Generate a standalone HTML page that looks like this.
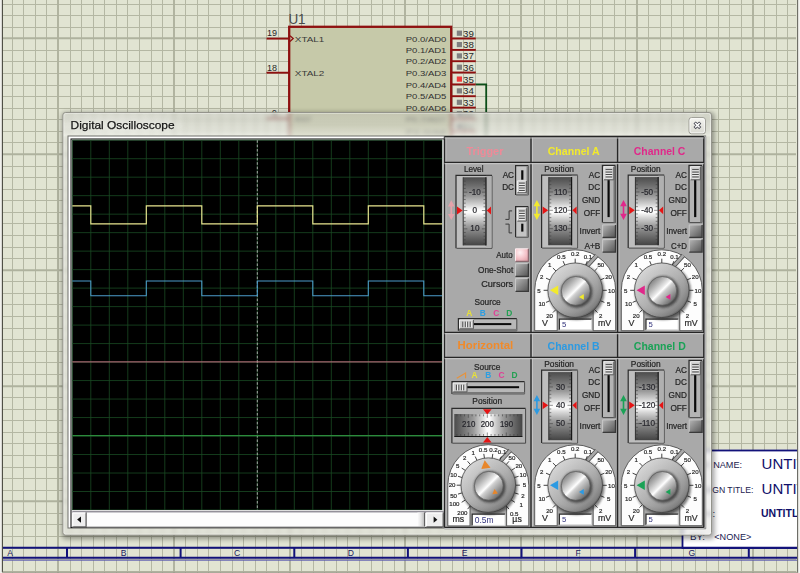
<!DOCTYPE html>
<html lang="en"><head><meta charset="utf-8"><title>Digital Oscilloscope</title>
<style>html,body{margin:0;padding:0;background:#E1E4D2;overflow:hidden}svg{display:block}text{font-family:'Liberation Sans', sans-serif;}</style></head><body>
<svg width="800" height="573" viewBox="0 0 800 573" font-family='"Liberation Sans", sans-serif'>

<defs>
<filter id="fglass" x="0" y="0" width="100%" height="100%"><feGaussianBlur stdDeviation="2.1"/></filter>
<filter id="fshadow" x="-5%" y="-5%" width="110%" height="110%"><feGaussianBlur stdDeviation="2.6"/></filter>
<filter id="fglow" x="-20%" y="-80%" width="140%" height="260%"><feGaussianBlur stdDeviation="4"/></filter>
<filter id="fknob" x="-20%" y="-20%" width="140%" height="140%"><feGaussianBlur stdDeviation="1.3"/></filter>
<filter id="fknob2" x="-30%" y="-30%" width="160%" height="160%"><feGaussianBlur stdDeviation="1.2"/></filter>
<linearGradient id="gglass" x1="0" y1="112.5" x2="0" y2="137" gradientUnits="userSpaceOnUse">
 <stop offset="0" stop-color="#C2C2C2" stop-opacity="0.36"/><stop offset="0.5" stop-color="#D2D2D2" stop-opacity="0.38"/>
 <stop offset="0.93" stop-color="#F4F4F2" stop-opacity="0.55"/><stop offset="1" stop-color="#E0E0DD" stop-opacity="0.50"/>
</linearGradient>
<linearGradient id="gthumbedge" x1="0" y1="0" x2="1" y2="0">
 <stop offset="0" stop-color="#FDFDFD"/><stop offset="0.5" stop-color="#E4E4E4"/><stop offset="1" stop-color="#B6B6B6"/>
</linearGradient>
<linearGradient id="gclose" x1="0" y1="0" x2="0" y2="1">
 <stop offset="0" stop-color="#F6F6F2"/><stop offset="0.5" stop-color="#E6E6E0"/><stop offset="1" stop-color="#DADAD2"/>
</linearGradient>
<linearGradient id="gwheelv" x1="0" y1="0" x2="0" y2="1">
 <stop offset="0" stop-color="#4C4C4C"/><stop offset="0.12" stop-color="#6C6C6C"/><stop offset="0.28" stop-color="#9A9A9A"/>
 <stop offset="0.4" stop-color="#D2D2D2"/><stop offset="0.48" stop-color="#FCFCFC"/><stop offset="0.52" stop-color="#FCFCFC"/>
 <stop offset="0.6" stop-color="#D2D2D2"/><stop offset="0.72" stop-color="#9A9A9A"/><stop offset="0.88" stop-color="#686868"/><stop offset="1" stop-color="#444444"/>
</linearGradient>
<linearGradient id="gwheelh" x1="0" y1="0" x2="1" y2="0">
 <stop offset="0" stop-color="#4C4C4C"/><stop offset="0.12" stop-color="#6C6C6C"/><stop offset="0.28" stop-color="#9A9A9A"/>
 <stop offset="0.4" stop-color="#D2D2D2"/><stop offset="0.48" stop-color="#FCFCFC"/><stop offset="0.52" stop-color="#FCFCFC"/>
 <stop offset="0.6" stop-color="#D2D2D2"/><stop offset="0.72" stop-color="#9A9A9A"/><stop offset="0.88" stop-color="#686868"/><stop offset="1" stop-color="#444444"/>
</linearGradient>
<linearGradient id="gbtn" x1="0" y1="0" x2="1" y2="1">
 <stop offset="0" stop-color="#B6B6B6"/><stop offset="0.45" stop-color="#8A8A8A"/><stop offset="1" stop-color="#545454"/>
</linearGradient>
<radialGradient id="gbtnpink" cx="0.35" cy="0.3" r="0.9">
 <stop offset="0" stop-color="#FFF2F4"/><stop offset="0.5" stop-color="#F6C6CC"/><stop offset="1" stop-color="#DC9AA2"/>
</radialGradient>
<linearGradient id="gknobo" x1="0.15" y1="0.1" x2="0.85" y2="0.9">
 <stop offset="0" stop-color="#D8D8D8"/><stop offset="0.5" stop-color="#B2B2B2"/><stop offset="1" stop-color="#808080"/>
</linearGradient>
<radialGradient id="gknobr" cx="0.46" cy="0.45" r="0.56">
 <stop offset="0" stop-color="#000" stop-opacity="0.03"/><stop offset="0.8" stop-color="#000" stop-opacity="0.0"/>
 <stop offset="0.93" stop-color="#000" stop-opacity="0.06"/><stop offset="1" stop-color="#000" stop-opacity="0.32"/>
</radialGradient>
<linearGradient id="gknobi" x1="0.12" y1="0.12" x2="0.88" y2="0.88">
 <stop offset="0" stop-color="#7C7C7C"/><stop offset="0.22" stop-color="#B4B4B4"/><stop offset="0.40" stop-color="#E4E4E4"/>
 <stop offset="0.48" stop-color="#FFFFFF"/><stop offset="0.56" stop-color="#D0D0D0"/><stop offset="0.75" stop-color="#A2A2A2"/>
 <stop offset="1" stop-color="#626262"/>
</linearGradient>
</defs>

<g id="bg">
<rect x="0" y="0" width="800" height="573" fill="#E1E4D2"/>
<path d="M12.5 0V573M23.5 0V573M35.5 0V573M46.5 0V573M70.5 0V573M81.5 0V573M93.5 0V573M104.5 0V573M116.5 0V573M127.5 0V573M139.5 0V573M151.5 0V573M162.5 0V573M185.5 0V573M197.5 0V573M208.5 0V573M220.5 0V573M232.5 0V573M243.5 0V573M255.5 0V573M266.5 0V573M278.5 0V573M301.5 0V573M313.5 0V573M324.5 0V573M336.5 0V573M347.5 0V573M359.5 0V573M371.5 0V573M382.5 0V573M394.5 0V573M417.5 0V573M428.5 0V573M440.5 0V573M452.5 0V573M463.5 0V573M475.5 0V573M486.5 0V573M498.5 0V573M509.5 0V573M533.5 0V573M544.5 0V573M556.5 0V573M567.5 0V573M579.5 0V573M590.5 0V573M602.5 0V573M614.5 0V573M625.5 0V573M648.5 0V573M660.5 0V573M671.5 0V573M683.5 0V573M695.5 0V573M706.5 0V573M718.5 0V573M729.5 0V573M741.5 0V573M764.5 0V573M776.5 0V573M787.5 0V573M2.5 4.5H796M2.5 15.5H796M2.5 27.5H796M2.5 50.5H796M2.5 61.5H796M2.5 73.5H796M2.5 85.5H796M2.5 96.5H796M2.5 108.5H796M2.5 119.5H796M2.5 131.5H796M2.5 142.5H796M2.5 166.5H796M2.5 177.5H796M2.5 189.5H796M2.5 200.5H796M2.5 212.5H796M2.5 223.5H796M2.5 235.5H796M2.5 247.5H796M2.5 258.5H796M2.5 281.5H796M2.5 293.5H796M2.5 304.5H796M2.5 316.5H796M2.5 328.5H796M2.5 339.5H796M2.5 351.5H796M2.5 362.5H796M2.5 374.5H796M2.5 397.5H796M2.5 409.5H796M2.5 420.5H796M2.5 432.5H796M2.5 443.5H796M2.5 455.5H796M2.5 467.5H796M2.5 478.5H796M2.5 490.5H796M2.5 513.5H796M2.5 524.5H796M2.5 536.5H796M2.5 548.5H796M2.5 559.5H796M2.5 571.5H796" stroke="#B4B7A3" stroke-width="1" fill="none"/>
<path d="M58 0V573M174 0V573M290 0V573M405 0V573M521 0V573M637 0V573M753 0V573M2.5 38.2H796M2.5 154.2H796M2.5 270.2H796M2.5 386.2H796M2.5 501.2H796" stroke="#AFB29E" stroke-width="1.9" fill="none"/>
<rect x="289.2" y="26.8" width="162" height="330" fill="#C6C9A9" stroke="#8E1010" stroke-width="2.3"/>
<text x="288.4" y="24.0" font-size="14.8" fill="#4A4A4A" textLength="17.2" lengthAdjust="spacingAndGlyphs">U1</text>
<path d="M266.5 38.6H289" stroke="#8E1010" stroke-width="1.9"/>
<text x="267.0" y="36.4" font-size="8.6" fill="#282828" textLength="10.0" lengthAdjust="spacingAndGlyphs">19</text>
<text x="294.8" y="41.8" font-size="8" fill="#383838" textLength="29.5" lengthAdjust="spacingAndGlyphs">XTAL1</text>
<path d="M266.5 72.7H289" stroke="#8E1010" stroke-width="1.9"/>
<text x="267.0" y="70.5" font-size="8.6" fill="#282828" textLength="10.0" lengthAdjust="spacingAndGlyphs">18</text>
<text x="294.8" y="75.9" font-size="8" fill="#383838" textLength="29.5" lengthAdjust="spacingAndGlyphs">XTAL2</text>
<path d="M290 35.8L293.2 38.6L290 41.4" stroke="#8E1010" stroke-width="1.3" fill="none"/>
<path d="M266.5 118.5H289" stroke="#8E1010" stroke-width="1.9"/>
<text x="272.0" y="116.3" font-size="8.6" fill="#282828">9</text>
<text x="294.8" y="121.7" font-size="8" fill="#383838" textLength="17.0" lengthAdjust="spacingAndGlyphs">RST</text>
<path d="M451.5 38.5H475.8" stroke="#8E1010" stroke-width="1.9"/>
<rect x="456.8" y="30.6" width="5.2" height="5.2" fill="#808080"/>
<text x="463.0" y="36.6" font-size="8.8" fill="#282828" textLength="10.8" lengthAdjust="spacingAndGlyphs">39</text>
<text x="405.8" y="41.7" font-size="8" fill="#303030" textLength="40.6" lengthAdjust="spacingAndGlyphs">P0.0/AD0</text>
<path d="M451.5 49.9H475.8" stroke="#8E1010" stroke-width="1.9"/>
<rect x="456.8" y="42.0" width="5.2" height="5.2" fill="#808080"/>
<text x="463.0" y="48.0" font-size="8.8" fill="#282828" textLength="10.8" lengthAdjust="spacingAndGlyphs">38</text>
<text x="405.8" y="53.1" font-size="8" fill="#303030" textLength="40.6" lengthAdjust="spacingAndGlyphs">P0.1/AD1</text>
<path d="M451.5 61.2H475.8" stroke="#8E1010" stroke-width="1.9"/>
<rect x="456.8" y="53.3" width="5.2" height="5.2" fill="#808080"/>
<text x="463.0" y="59.3" font-size="8.8" fill="#282828" textLength="10.8" lengthAdjust="spacingAndGlyphs">37</text>
<text x="405.8" y="64.4" font-size="8" fill="#303030" textLength="40.6" lengthAdjust="spacingAndGlyphs">P0.2/AD2</text>
<path d="M451.5 72.5H475.8" stroke="#8E1010" stroke-width="1.9"/>
<rect x="456.8" y="64.6" width="5.2" height="5.2" fill="#808080"/>
<text x="463.0" y="70.6" font-size="8.8" fill="#282828" textLength="10.8" lengthAdjust="spacingAndGlyphs">36</text>
<text x="405.8" y="75.7" font-size="8" fill="#303030" textLength="40.6" lengthAdjust="spacingAndGlyphs">P0.3/AD3</text>
<path d="M451.5 84.4H475.8" stroke="#8E1010" stroke-width="1.9"/>
<rect x="456.8" y="76.5" width="5.2" height="5.2" fill="#F03A3A"/>
<text x="463.0" y="82.5" font-size="8.8" fill="#282828" textLength="10.8" lengthAdjust="spacingAndGlyphs">35</text>
<text x="405.8" y="87.6" font-size="8" fill="#303030" textLength="40.6" lengthAdjust="spacingAndGlyphs">P0.4/AD4</text>
<path d="M451.5 96.2H475.8" stroke="#8E1010" stroke-width="1.9"/>
<rect x="456.8" y="88.3" width="5.2" height="5.2" fill="#808080"/>
<text x="463.0" y="94.3" font-size="8.8" fill="#282828" textLength="10.8" lengthAdjust="spacingAndGlyphs">34</text>
<text x="405.8" y="99.4" font-size="8" fill="#303030" textLength="40.6" lengthAdjust="spacingAndGlyphs">P0.5/AD5</text>
<path d="M451.5 107.6H475.8" stroke="#8E1010" stroke-width="1.9"/>
<rect x="456.8" y="99.7" width="5.2" height="5.2" fill="#808080"/>
<text x="463.0" y="105.7" font-size="8.8" fill="#282828" textLength="10.8" lengthAdjust="spacingAndGlyphs">33</text>
<text x="405.8" y="110.8" font-size="8" fill="#303030" textLength="40.6" lengthAdjust="spacingAndGlyphs">P0.6/AD6</text>
<path d="M451.5 119.1H475.8" stroke="#8E1010" stroke-width="1.9"/>
<rect x="456.8" y="111.2" width="5.2" height="5.2" fill="#808080"/>
<text x="463.0" y="117.2" font-size="8.8" fill="#282828" textLength="10.8" lengthAdjust="spacingAndGlyphs">32</text>
<text x="405.8" y="122.3" font-size="8" fill="#303030" textLength="40.6" lengthAdjust="spacingAndGlyphs">P0.7/AD7</text>
<path d="M451.5 131.8H475.8" stroke="#8E1010" stroke-width="1.9"/>
<rect x="456.8" y="123.9" width="5.2" height="5.2" fill="#808080"/>
<text x="463.0" y="129.9" font-size="8.8" fill="#282828" textLength="10.8" lengthAdjust="spacingAndGlyphs">21</text>
<text x="405.8" y="135.0" font-size="8" fill="#303030" textLength="40.6" lengthAdjust="spacingAndGlyphs">P2.0/A8</text>
<path d="M475.8 84.4H486.2V330" stroke="#0B4E18" stroke-width="1.8" fill="none"/>
<rect x="682.5" y="450.5" width="116" height="97.5" fill="#FFFFFF" stroke="#12127A" stroke-width="1.8"/>
<text x="691.4" y="467.6" font-size="9.4" fill="#22224E" textLength="50.7" lengthAdjust="spacingAndGlyphs">FILE NAME:</text>
<text x="692.0" y="492.6" font-size="9.4" fill="#22224E" textLength="61.3" lengthAdjust="spacingAndGlyphs">DESIGN TITLE:</text>
<text x="688.4" y="517.2" font-size="9.4" fill="#22224E" textLength="26.8" lengthAdjust="spacingAndGlyphs">PATH:</text>
<text x="690.0" y="540.0" font-size="9.4" fill="#1A1A50" textLength="15.0" lengthAdjust="spacingAndGlyphs">BY:</text>
<text x="714.3" y="540.0" font-size="9.4" fill="#1A1A50" textLength="37.0" lengthAdjust="spacingAndGlyphs">&lt;NONE&gt;</text>
<clipPath id="tbclip"><rect x="683" y="451" width="114.3" height="96"/></clipPath>
<g clip-path="url(#tbclip)">
<text x="761.6" y="468.5" font-size="15.0" fill="#10106A">UNTITLED.DSN</text>
<text x="761.6" y="493.7" font-size="15.0" fill="#10106A">UNTITLED</text>
<text x="761.0" y="517.0" font-size="10.5" fill="#10106A" font-weight="bold">UNTITLED.DSN</text>
</g>
<path d="M2.5 547.8H797.5" stroke="#12127A" stroke-width="2"/>
<path d="M2.5 557.8H797.5" stroke="#12127A" stroke-width="2"/>
<path d="M2.5 560.2H797.5" stroke="#5A5AB0" stroke-width="1"/>
<path d="M67.0 548V558" stroke="#12127A" stroke-width="2"/>
<path d="M180.6 548V558" stroke="#12127A" stroke-width="2"/>
<path d="M294.3 548V558" stroke="#12127A" stroke-width="2"/>
<path d="M407.9 548V558" stroke="#12127A" stroke-width="2"/>
<path d="M521.5 548V558" stroke="#12127A" stroke-width="2"/>
<path d="M635.1 548V558" stroke="#12127A" stroke-width="2"/>
<path d="M748.8 548V558" stroke="#12127A" stroke-width="2"/>
<text x="10.0" y="556.0" font-size="8.6" fill="#1A1A60" text-anchor="middle">A</text>
<text x="123.6" y="556.0" font-size="8.6" fill="#1A1A60" text-anchor="middle">B</text>
<text x="237.2" y="556.0" font-size="8.6" fill="#1A1A60" text-anchor="middle">C</text>
<text x="350.9" y="556.0" font-size="8.6" fill="#1A1A60" text-anchor="middle">D</text>
<text x="464.5" y="556.0" font-size="8.6" fill="#1A1A60" text-anchor="middle">E</text>
<text x="578.1" y="556.0" font-size="8.6" fill="#1A1A60" text-anchor="middle">F</text>
<text x="691.8" y="556.0" font-size="8.6" fill="#1A1A60" text-anchor="middle">G</text>
<rect x="0" y="0" width="2" height="573" fill="#F0F0EC"/>
<path d="M2.4 0V572" stroke="#48483F" stroke-width="1.1"/>
<rect x="798" y="0" width="2" height="573" fill="#F4F4F0"/>
<path d="M797.6 0V573" stroke="#6A6A62" stroke-width="1.1"/>
<path d="M2 572.3H798" stroke="#9A9C8C" stroke-width="1"/>
</g>
<rect x="61.9" y="112.5" width="652.6" height="426.6" rx="4" fill="#000" opacity="0.36" filter="url(#fshadow)"/>
<clipPath id="frameclip"><rect x="62.9" y="112.5" width="648.6" height="422.6" rx="2.5"/></clipPath>
<g clip-path="url(#frameclip)">
<use href="#bg" filter="url(#fglass)"/>
<rect x="62.9" y="112.5" width="648.6" height="422.6" fill="url(#gglass)"/>
</g>
<rect x="62.9" y="112.5" width="648.6" height="422.6" rx="2.5" fill="none" stroke="#94948C" stroke-width="1"/>
<rect x="63.9" y="113.5" width="646.6" height="420.6" rx="2" fill="none" stroke="#FFFFFF" stroke-opacity="0.35" stroke-width="1"/>
<ellipse cx="122" cy="124.5" rx="60" ry="7" fill="#FFFFFF" opacity="0.40" filter="url(#fglow)"/>
<text x="70.6" y="128.7" font-size="11.8" fill="#141414" textLength="104.0" lengthAdjust="spacingAndGlyphs" stroke="#141414" stroke-width="0.25">Digital Oscilloscope</text>
<rect x="689" y="117.6" width="16.4" height="16.2" rx="2.4" fill="url(#gclose)" stroke="#9C9C94" stroke-width="1"/>
<rect x="690" y="118.6" width="14.4" height="14.2" rx="1.8" fill="none" stroke="#FFFFFF" stroke-opacity="0.7" stroke-width="1"/>
<path d="M695.7 123.6L699.1 127M699.1 123.6L695.7 127" stroke="#4A4A54" stroke-width="3.1" stroke-linecap="square"/>
<path d="M695.7 123.6L699.1 127M699.1 123.6L695.7 127" stroke="#FFFFFF" stroke-width="1.5" stroke-linecap="square"/>
<rect x="68" y="136" width="637.6" height="392" fill="#FFFFFF" stroke="#6E6E6A" stroke-width="1"/>
<rect x="71" y="139" width="373" height="388.5" fill="#FFFFFF" stroke="#1A1A1A" stroke-width="1.1"/>
<rect x="72.3" y="140.2" width="370.0" height="369.8" fill="#000000"/>
<path d="M72.30 140.2V510.0M72.3 140.20H442.3M90.80 140.2V510.0M72.3 158.69H442.3M109.30 140.2V510.0M72.3 177.18H442.3M127.80 140.2V510.0M72.3 195.67H442.3M146.30 140.2V510.0M72.3 214.16H442.3M164.80 140.2V510.0M72.3 232.65H442.3M183.30 140.2V510.0M72.3 251.14H442.3M201.80 140.2V510.0M72.3 269.63H442.3M220.30 140.2V510.0M72.3 288.12H442.3M238.80 140.2V510.0M72.3 306.61H442.3M257.30 140.2V510.0M72.3 325.10H442.3M275.80 140.2V510.0M72.3 343.59H442.3M294.30 140.2V510.0M72.3 362.08H442.3M312.80 140.2V510.0M72.3 380.57H442.3M331.30 140.2V510.0M72.3 399.06H442.3M349.80 140.2V510.0M72.3 417.55H442.3M368.30 140.2V510.0M72.3 436.04H442.3M386.80 140.2V510.0M72.3 454.53H442.3M405.30 140.2V510.0M72.3 473.02H442.3M423.80 140.2V510.0M72.3 491.51H442.3M442.30 140.2V510.0M72.3 510.00H442.3" stroke="#194A23" stroke-width="0.8" fill="none"/>
<path d="M257.30 140.2V510.0" stroke="#B8B8B8" stroke-width="0.9" stroke-dasharray="2.6 1.8" fill="none"/>
<path d="M72.30 205.90L90.80 205.90L90.80 223.90L146.30 223.90L146.30 205.90L201.80 205.90L201.80 223.90L257.30 223.90L257.30 205.90L312.80 205.90L312.80 223.90L368.30 223.90L368.30 205.90L423.80 205.90L423.80 223.90L442.30 223.90" stroke="#EAE690" stroke-width="1.15" fill="none" stroke-linejoin="miter"/>
<path d="M72.30 280.90L90.80 280.90L90.80 295.70L146.30 295.70L146.30 280.90L201.80 280.90L201.80 295.70L257.30 295.70L257.30 280.90L312.80 280.90L312.80 295.70L368.30 295.70L368.30 280.90L423.80 280.90L423.80 295.70L442.30 295.70" stroke="#4C9CCC" stroke-width="1.05" fill="none" stroke-linejoin="miter"/>
<path d="M72.3 361.9H442.3" stroke="#C87484" stroke-width="1.0"/>
<path d="M72.3 435.6H442.3" stroke="#2C8A3C" stroke-width="1.2"/>
<rect x="442.3" y="139.5" width="2" height="388" fill="#DCDCDC"/>
<rect x="72.3" y="510.2" width="371.4" height="17" fill="#FBFBFB"/>
<path d="M72.3 510.8H443.7" stroke="#DEDEDE" stroke-width="1.4"/>
<path d="M72.3 512.0H443.7" stroke="#3C3648" stroke-width="1.0"/>
<rect x="86.8" y="512.5" width="337.6" height="14.4" fill="#FDFDFD"/>
<rect x="417.5" y="512.5" width="7" height="14.4" fill="url(#gthumbedge)"/>
<path d="M424.6 512.5V527.2" stroke="#5C5C5C" stroke-width="1.1"/>
<path d="M86.8 526.8H425" stroke="#B4B4B4" stroke-width="1.0"/>
<rect x="72.3" y="512.4" width="14.2" height="14.6" fill="#EEEEEE"/>
<path d="M86.1 512.4V527.2M72.3 526.9H86.5" stroke="#626262" stroke-width="1.3" fill="none"/>
<path d="M72.8 526.4V513H85.3" stroke="#FFFFFF" stroke-width="1" fill="none"/>
<path d="M77.1 519.6L81.0 516.4V522.8z" fill="#101010"/>
<rect x="425.9" y="512.4" width="17.7" height="14.6" fill="#EEEEEE"/>
<path d="M443.2 512.4V527.2M425.9 526.9H443.59999999999997" stroke="#626262" stroke-width="1.3" fill="none"/>
<path d="M426.4 526.4V513H442.4" stroke="#FFFFFF" stroke-width="1" fill="none"/>
<path d="M437.4 519.7L433.6 516.6V522.8z" fill="#101010"/>
<rect x="444.5" y="136.5" width="261.19999999999993" height="392.4" fill="#B2B2B2"/>
<path d="M705.7 137V528.9H444.5" stroke="#8A8A8A" stroke-width="0.8" fill="none"/>
<rect x="444.5" y="136.5" width="259.69999999999993" height="391.2" fill="#A9A9A9"/>
<text x="484.9" y="155.2" font-size="11.3" fill="#EE8A98" text-anchor="middle" font-weight="bold" textLength="37.0" lengthAdjust="spacingAndGlyphs">Trigger</text>
<text x="463.9" y="171.6" font-size="8.2" fill="#262626" stroke="#262626" stroke-width="0.22" textLength="19.6" lengthAdjust="spacingAndGlyphs">Level</text>
<rect x="456.0" y="175.3" width="36.0" height="73.0" fill="#BEBEBE"/>
<path d="M492.0 175.8V248.3H456.5" stroke="#484848" stroke-width="1.0" fill="none"/>
<path d="M456.0 248.3V175.3H492.0" stroke="#2C2C2C" stroke-width="1.2" fill="none"/>
<rect x="486.0" y="175.9" width="5.5" height="71.9" fill="#B0B0B0"/>
<rect x="463.2" y="177.3" width="22.8" height="68.1" fill="url(#gwheelv)"/>
<path d="M486.0 177.3V245.4" stroke="#161616" stroke-width="1.2"/>
<path d="M463.2 177.3V245.4" stroke="#303030" stroke-width="1.0"/>
<path d="M463.7 181.14h2.0M485.5 181.14h-2.0M463.7 184.81h2.0M485.5 184.81h-2.0M463.7 188.48h2.0M485.5 188.48h-2.0M463.7 192.15h3.6M485.5 192.15h-3.6M463.7 195.82h2.0M485.5 195.82h-2.0M463.7 199.49h2.0M485.5 199.49h-2.0M463.7 203.16h2.0M485.5 203.16h-2.0M463.7 206.83h2.0M485.5 206.83h-2.0M463.7 210.50h3.6M485.5 210.50h-3.6M463.7 214.17h2.0M485.5 214.17h-2.0M463.7 217.84h2.0M485.5 217.84h-2.0M463.7 221.51h2.0M485.5 221.51h-2.0M463.7 225.18h2.0M485.5 225.18h-2.0M463.7 228.85h3.6M485.5 228.85h-3.6M463.7 232.52h2.0M485.5 232.52h-2.0M463.7 236.19h2.0M485.5 236.19h-2.0M463.7 239.86h2.0M485.5 239.86h-2.0M463.7 243.53h2.0M485.5 243.53h-2.0" stroke="#3A3A3A" stroke-width="0.7" fill="none" opacity="0.8"/>
<text x="474.9" y="194.8" font-size="8.2" fill="#2A2A30" text-anchor="middle" stroke="#2A2A30" stroke-width="0.22">-10</text>
<text x="474.9" y="213.1" font-size="8.2" fill="#2A2A30" text-anchor="middle" stroke="#2A2A30" stroke-width="0.22">0</text>
<text x="474.9" y="231.4" font-size="8.2" fill="#2A2A30" text-anchor="middle" stroke="#2A2A30" stroke-width="0.22">10</text>
<path d="M457.0 206.6L462.6 210.5L457.0 214.4z" fill="#E61414"/>
<path d="M491.0 206.6L486.8 210.5L491.0 214.4z" fill="#E61414"/>
<path d="M451.3 200.3l3.3 6.2h-6.6zM451.3 220.1l3.3 -6.2h-6.6z" fill="#E6A2AA"/>
<path d="M451.3 205.3V215.1" stroke="#E6A2AA" stroke-width="1.6"/>
<text x="514.0" y="177.5" font-size="8.2" fill="#262626" text-anchor="end" stroke="#262626" stroke-width="0.22">AC</text>
<text x="514.0" y="190.3" font-size="8.2" fill="#262626" text-anchor="end" stroke="#262626" stroke-width="0.22">DC</text>
<rect x="515.6" y="165.7" width="12.8" height="29.2" fill="#C4C4C4"/>
<path d="M528.4 166.2V194.9H516.1" stroke="#484848" stroke-width="1.0" fill="none"/>
<path d="M515.6 194.9V165.7H528.4" stroke="#2C2C2C" stroke-width="1.2" fill="none"/>
<rect x="526.6" y="166.3" width="1.8" height="28.6" fill="#7C7C7C"/>
<rect x="521.2" y="170.3" width="2.2" height="9.4" fill="#0A0A0A"/>
<rect x="517.4" y="180.9" width="9.0" height="11.8" fill="#CACACA"/>
<path d="M517.4 192.7V180.9H526.4" stroke="#F2F2F2" stroke-width="1" fill="none"/>
<path d="M526.4 180.9V192.7H517.4" stroke="#5A5A5A" stroke-width="1" fill="none"/>
<path d="M519.0 184.22H524.8M519.0 186.68H524.8M519.0 189.12H524.8M519.0 191.58H524.8" stroke="#F4F4F4" stroke-width="1" fill="none"/>
<path d="M519.0 183.12H524.8M519.0 185.58H524.8M519.0 188.03H524.8M519.0 190.48H524.8" stroke="#4A4A4A" stroke-width="1" fill="none"/>
<rect x="515.6" y="206.6" width="12.8" height="30.6" fill="#C4C4C4"/>
<path d="M528.4 207.1V237.2H516.1" stroke="#484848" stroke-width="1.0" fill="none"/>
<path d="M515.6 237.2V206.6H528.4" stroke="#2C2C2C" stroke-width="1.2" fill="none"/>
<rect x="526.6" y="207.2" width="1.8" height="30.0" fill="#7C7C7C"/>
<rect x="521.2" y="223.7" width="2.2" height="7.9" fill="#0A0A0A"/>
<rect x="517.4" y="208.2" width="9.0" height="12.9" fill="#CACACA"/>
<path d="M517.4 221.1V208.2H526.4" stroke="#F2F2F2" stroke-width="1" fill="none"/>
<path d="M526.4 208.2V221.1H517.4" stroke="#5A5A5A" stroke-width="1" fill="none"/>
<path d="M519.0 212.07H524.8M519.0 214.52H524.8M519.0 216.97H524.8M519.0 219.42H524.8" stroke="#F4F4F4" stroke-width="1" fill="none"/>
<path d="M519.0 210.97H524.8M519.0 213.42H524.8M519.0 215.87H524.8M519.0 218.32H524.8" stroke="#4A4A4A" stroke-width="1" fill="none"/>
<path d="M505.4 219.4H509.1V210.9H512.1M505.4 224.1H509.1V232.9H512.1" stroke="#3A3A3A" stroke-width="1" fill="none"/>
<text x="512.6" y="258.4" font-size="8.2" fill="#262626" text-anchor="end" stroke="#262626" stroke-width="0.22" textLength="16.4" lengthAdjust="spacingAndGlyphs">Auto</text>
<text x="513.2" y="272.8" font-size="8.2" fill="#262626" text-anchor="end" stroke="#262626" stroke-width="0.22" textLength="35.2" lengthAdjust="spacingAndGlyphs">One-Shot</text>
<text x="513.2" y="287.1" font-size="8.2" fill="#262626" text-anchor="end" stroke="#262626" stroke-width="0.22" textLength="32.0" lengthAdjust="spacingAndGlyphs">Cursors</text>
<rect x="515.5" y="248.8" width="12.9" height="12.5" fill="url(#gbtnpink)"/>
<path d="M515.5 261.3V248.8H528.4" stroke="#FFF0F2" stroke-width="1" fill="none"/>
<path d="M528.4 248.8V261.3H515.5" stroke="#8A6A70" stroke-width="1.3" fill="none"/>
<rect x="515.5" y="263.6" width="12.9" height="12.7" fill="url(#gbtn)"/>
<path d="M515.5 276.3V263.6H528.4" stroke="#C8C8C8" stroke-width="1" fill="none"/>
<path d="M528.4 263.6V276.3H515.5" stroke="#3A3A3A" stroke-width="1.3" fill="none"/>
<rect x="515.5" y="278.6" width="12.9" height="12.8" fill="url(#gbtn)"/>
<path d="M515.5 291.4V278.6H528.4" stroke="#C8C8C8" stroke-width="1" fill="none"/>
<path d="M528.4 278.6V291.4H515.5" stroke="#3A3A3A" stroke-width="1.3" fill="none"/>
<text x="487.6" y="305.4" font-size="8.2" fill="#262626" text-anchor="middle" stroke="#262626" stroke-width="0.22" textLength="26.3" lengthAdjust="spacingAndGlyphs">Source</text>
<text x="469.3" y="315.9" font-size="8.4" fill="#E8E236" text-anchor="middle" font-weight="bold">A</text>
<text x="482.8" y="315.9" font-size="8.4" fill="#2E9EE0" text-anchor="middle" font-weight="bold">B</text>
<text x="496.2" y="315.9" font-size="8.4" fill="#E03E96" text-anchor="middle" font-weight="bold">C</text>
<text x="509.4" y="315.9" font-size="8.4" fill="#22A052" text-anchor="middle" font-weight="bold">D</text>
<rect x="458.4" y="318.6" width="58.4" height="12.2" fill="#B8B8B8"/>
<path d="M516.8 319.1V330.8H458.9" stroke="#484848" stroke-width="1.0" fill="none"/>
<path d="M458.4 330.8V318.6H516.8" stroke="#2C2C2C" stroke-width="1.2" fill="none"/>
<rect x="459.0" y="328.9" width="57.8" height="1.9" fill="#787878"/>
<rect x="472.4" y="323.1" width="38.9" height="2.0" fill="#0A0A0A"/>
<rect x="459.6" y="320.0" width="13.8" height="8.8" fill="#CACACA"/>
<path d="M459.6 328.8V320.0H473.4" stroke="#F2F2F2" stroke-width="1" fill="none"/>
<path d="M473.4 320.0V328.8H459.6" stroke="#5A5A5A" stroke-width="1" fill="none"/>
<path d="M463.93 321.6V327.2M466.38 321.6V327.2M468.83 321.6V327.2M471.28 321.6V327.2" stroke="#F4F4F4" stroke-width="1" fill="none"/>
<path d="M462.82 321.6V327.2M465.27 321.6V327.2M467.73 321.6V327.2M470.18 321.6V327.2" stroke="#4A4A4A" stroke-width="1" fill="none"/>
<text x="485.4" y="349.2" font-size="11.3" fill="#F08A2A" text-anchor="middle" font-weight="bold" textLength="55.8" lengthAdjust="spacingAndGlyphs">Horizontal</text>
<text x="487.2" y="369.5" font-size="8.2" fill="#262626" text-anchor="middle" stroke="#262626" stroke-width="0.22" textLength="26.3" lengthAdjust="spacingAndGlyphs">Source</text>
<path d="M456.8 378.2L465.6 373V378.2" stroke="#E8923A" stroke-width="1.1" fill="none"/>
<text x="474.5" y="377.8" font-size="8.4" fill="#E8E236" text-anchor="middle" font-weight="bold">A</text>
<text x="488.4" y="377.8" font-size="8.4" fill="#2E9EE0" text-anchor="middle" font-weight="bold">B</text>
<text x="501.5" y="377.8" font-size="8.4" fill="#E03E96" text-anchor="middle" font-weight="bold">C</text>
<text x="514.5" y="377.8" font-size="8.4" fill="#22A052" text-anchor="middle" font-weight="bold">D</text>
<rect x="452.0" y="381.7" width="72.6" height="12.2" fill="#B8B8B8"/>
<path d="M524.6 382.2V393.9H452.5" stroke="#484848" stroke-width="1.0" fill="none"/>
<path d="M452.0 393.9V381.7H524.6" stroke="#2C2C2C" stroke-width="1.2" fill="none"/>
<rect x="452.6" y="392.0" width="72.0" height="1.9" fill="#787878"/>
<rect x="466.0" y="386.2" width="53.1" height="2.0" fill="#0A0A0A"/>
<rect x="453.2" y="383.1" width="13.8" height="8.8" fill="#CACACA"/>
<path d="M453.2 391.9V383.1H467.0" stroke="#F2F2F2" stroke-width="1" fill="none"/>
<path d="M467.0 383.1V391.9H453.2" stroke="#5A5A5A" stroke-width="1" fill="none"/>
<path d="M457.53 384.7V390.3M459.98 384.7V390.3M462.43 384.7V390.3M464.88 384.7V390.3" stroke="#F4F4F4" stroke-width="1" fill="none"/>
<path d="M456.43 384.7V390.3M458.88 384.7V390.3M461.33 384.7V390.3M463.78 384.7V390.3" stroke="#4A4A4A" stroke-width="1" fill="none"/>
<text x="487.2" y="404.4" font-size="8.2" fill="#262626" text-anchor="middle" stroke="#262626" stroke-width="0.22" textLength="29.8" lengthAdjust="spacingAndGlyphs">Position</text>
<rect x="451.9" y="408.4" width="73.7" height="34.8" fill="#B2B2B2"/>
<path d="M525.6 408.9V443.2H452.4" stroke="#484848" stroke-width="1.0" fill="none"/>
<path d="M451.9 443.2V408.4H525.6" stroke="#2C2C2C" stroke-width="1.2" fill="none"/>
<rect x="454.3" y="414.0" width="68.1" height="22.5" fill="url(#gwheelh)"/>
<path d="M454.3 436.5H522.4" stroke="#161616" stroke-width="1.1"/>
<path d="M456.90 414.4v1.9M456.90 435.9v-1.9M460.70 414.4v1.9M460.70 435.9v-1.9M464.50 414.4v1.9M464.50 435.9v-1.9M468.30 414.4v3.4M468.30 435.9v-3.4M472.10 414.4v1.9M472.10 435.9v-1.9M475.90 414.4v1.9M475.90 435.9v-1.9M479.70 414.4v1.9M479.70 435.9v-1.9M483.50 414.4v1.9M483.50 435.9v-1.9M487.30 414.4v3.4M487.30 435.9v-3.4M491.10 414.4v1.9M491.10 435.9v-1.9M494.90 414.4v1.9M494.90 435.9v-1.9M498.70 414.4v1.9M498.70 435.9v-1.9M502.50 414.4v1.9M502.50 435.9v-1.9M506.30 414.4v3.4M506.30 435.9v-3.4M510.10 414.4v1.9M510.10 435.9v-1.9M513.90 414.4v1.9M513.90 435.9v-1.9M517.70 414.4v1.9M517.70 435.9v-1.9" stroke="#3A3A3A" stroke-width="0.7" fill="none" opacity="0.8"/>
<text x="468.7" y="427.4" font-size="8.8" fill="#26262C" text-anchor="middle" stroke="#26262C" stroke-width="0.22" textLength="13.2" lengthAdjust="spacingAndGlyphs">210</text>
<text x="487.3" y="427.4" font-size="8.8" fill="#26262C" text-anchor="middle" stroke="#26262C" stroke-width="0.22" textLength="13.2" lengthAdjust="spacingAndGlyphs">200</text>
<text x="506.5" y="427.4" font-size="8.8" fill="#26262C" text-anchor="middle" stroke="#26262C" stroke-width="0.22" textLength="13.2" lengthAdjust="spacingAndGlyphs">190</text>
<path d="M483.0 409.2H491.6L487.3 414.4z" fill="#E61414"/>
<path d="M483.0 442.4H491.6L487.3 436.9z" fill="#E61414"/>
<path d="M447.8 525.9V485.2A40.5 40.5 0 0 1 528.8 485.2V525.9z" fill="#FDFDFD" stroke="#4E4E4E" stroke-width="0.9"/>
<rect x="470.0" y="505.2" width="36.6" height="21.2" fill="#A9A9A9"/>
<path d="M470.0 505.2V525.9M506.6 505.2V525.9" stroke="#4E4E4E" stroke-width="0.9"/>
<path d="M500.9 460.6L510.1 450.6" stroke="#4E4E4E" stroke-width="4.4"/>
<path d="M500.9 460.6L510.1 450.6" stroke="#A9A9A9" stroke-width="2.8"/>
<path d="M470.6 505.6L467.6 509.1M465.6 499.8L461.7 502.3M462.4 492.8L458.0 494.1M461.3 485.2L456.7 485.2M462.4 477.6L458.0 476.3M465.6 470.6L461.7 468.1M470.6 464.8L467.6 461.3M477.1 460.6L475.2 456.5M484.5 458.5L483.8 453.9M492.1 458.5L492.8 453.9M499.5 460.6L501.4 456.5M506.0 464.8L509.0 461.3M511.0 470.6L514.9 468.1M514.2 477.6L518.6 476.3M515.3 485.2L519.9 485.2M514.2 492.8L518.6 494.1M511.0 499.8L514.9 502.3M506.0 505.6L509.0 509.1" stroke="#2E2E2E" stroke-width="0.9" fill="none"/>
<text x="462.4" y="515.2" font-size="6.1" fill="#2C2C2C" text-anchor="middle" stroke="#2C2C2C" stroke-width="0.22">200</text>
<text x="454.4" y="506.4" font-size="6.1" fill="#2C2C2C" text-anchor="middle" stroke="#2C2C2C" stroke-width="0.22">100</text>
<text x="453.6" y="497.6" font-size="6.1" fill="#2C2C2C" text-anchor="middle" stroke="#2C2C2C" stroke-width="0.22">50</text>
<text x="452.1" y="487.4" font-size="6.1" fill="#2C2C2C" text-anchor="middle" stroke="#2C2C2C" stroke-width="0.22">20</text>
<text x="453.6" y="477.2" font-size="6.1" fill="#2C2C2C" text-anchor="middle" stroke="#2C2C2C" stroke-width="0.22">10</text>
<text x="457.8" y="467.8" font-size="6.1" fill="#2C2C2C" text-anchor="middle" stroke="#2C2C2C" stroke-width="0.22">5</text>
<text x="464.6" y="460.0" font-size="6.1" fill="#2C2C2C" text-anchor="middle" stroke="#2C2C2C" stroke-width="0.22">2</text>
<text x="473.3" y="454.5" font-size="6.1" fill="#2C2C2C" text-anchor="middle" stroke="#2C2C2C" stroke-width="0.22">1</text>
<text x="483.1" y="451.6" font-size="6.1" fill="#2C2C2C" text-anchor="middle" stroke="#2C2C2C" stroke-width="0.22">0.5</text>
<text x="493.5" y="451.6" font-size="6.1" fill="#2C2C2C" text-anchor="middle" stroke="#2C2C2C" stroke-width="0.22">0.2</text>
<text x="502.1" y="454.2" font-size="6.1" fill="#2C2C2C" text-anchor="middle" stroke="#2C2C2C" stroke-width="0.22">0.1</text>
<text x="512.0" y="460.0" font-size="6.1" fill="#2C2C2C" text-anchor="middle" stroke="#2C2C2C" stroke-width="0.22">50</text>
<text x="518.8" y="467.8" font-size="6.1" fill="#2C2C2C" text-anchor="middle" stroke="#2C2C2C" stroke-width="0.22">20</text>
<text x="523.0" y="477.2" font-size="6.1" fill="#2C2C2C" text-anchor="middle" stroke="#2C2C2C" stroke-width="0.22">10</text>
<text x="524.5" y="487.4" font-size="6.1" fill="#2C2C2C" text-anchor="middle" stroke="#2C2C2C" stroke-width="0.22">5</text>
<text x="523.0" y="497.6" font-size="6.1" fill="#2C2C2C" text-anchor="middle" stroke="#2C2C2C" stroke-width="0.22">2</text>
<text x="521.2" y="506.8" font-size="6.1" fill="#2C2C2C" text-anchor="middle" stroke="#2C2C2C" stroke-width="0.22">1</text>
<text x="514.2" y="515.8" font-size="6.1" fill="#2C2C2C" text-anchor="middle" stroke="#2C2C2C" stroke-width="0.22">0.5</text>
<text x="452.4" y="521.6" font-size="8.8" fill="#2C2C2C" stroke="#2C2C2C" stroke-width="0.22">ms</text>
<text x="521.8" y="521.6" font-size="8.8" fill="#2C2C2C" text-anchor="end" stroke="#2C2C2C" stroke-width="0.22">µs</text>
<rect x="472.2" y="514.2" width="32.8" height="11.2" fill="#FFFFFF"/>
<path d="M472.2 525.4V514.2H505.0" stroke="#2C2C2C" stroke-width="1.2" fill="none"/>
<path d="M505.0 514.7V525.4H472.7" stroke="#DADADA" stroke-width="1" fill="none"/>
<text x="474.7" y="522.9" font-size="8.5" fill="#34347C">0.5m</text>
<circle cx="489.5" cy="486.8" r="28.2" fill="#1E1E1E" opacity="0.55" filter="url(#fknob)"/>
<circle cx="488.3" cy="485.2" r="27.3" fill="url(#gknobo)" stroke="#4A4A4A" stroke-width="0.8"/>
<circle cx="488.3" cy="485.2" r="27.3" fill="url(#gknobr)"/>
<circle cx="489.7" cy="486.8" r="15.8" fill="#2A2A2A" opacity="0.7" filter="url(#fknob2)"/>
<circle cx="488.8" cy="485.8" r="14.4" fill="url(#gknobi)" stroke="#5A5A5A" stroke-width="0.7"/>
<g transform="rotate(-8.2 488.3 485.2)"><path d="M488.3 460.0l4.7 8.2h-9.4z" fill="#E8862A"/></g>
<g transform="rotate(-8.2 494.9 491.8)"><path d="M494.9 489.0l2.8 4.8h-5.6z" fill="#E8862A"/></g>
<text x="573.7" y="155.3" font-size="11.3" fill="#F2EA2C" text-anchor="middle" font-weight="bold" textLength="52.0" lengthAdjust="spacingAndGlyphs">Channel A</text>
<text x="544.2" y="171.8" font-size="8.2" fill="#262626" stroke="#262626" stroke-width="0.22" textLength="29.8" lengthAdjust="spacingAndGlyphs">Position</text>
<rect x="541.6" y="175.1" width="36.0" height="73.0" fill="#BEBEBE"/>
<path d="M577.6 175.6V248.1H542.1" stroke="#484848" stroke-width="1.0" fill="none"/>
<path d="M541.6 248.1V175.1H577.6" stroke="#2C2C2C" stroke-width="1.2" fill="none"/>
<rect x="571.6" y="175.7" width="5.5" height="71.9" fill="#B0B0B0"/>
<rect x="548.8" y="177.1" width="22.8" height="68.1" fill="url(#gwheelv)"/>
<path d="M571.6 177.1V245.2" stroke="#161616" stroke-width="1.2"/>
<path d="M548.8 177.1V245.2" stroke="#303030" stroke-width="1.0"/>
<path d="M549.3 180.94h2.0M571.1 180.94h-2.0M549.3 184.61h2.0M571.1 184.61h-2.0M549.3 188.28h2.0M571.1 188.28h-2.0M549.3 191.95h3.6M571.1 191.95h-3.6M549.3 195.62h2.0M571.1 195.62h-2.0M549.3 199.29h2.0M571.1 199.29h-2.0M549.3 202.96h2.0M571.1 202.96h-2.0M549.3 206.63h2.0M571.1 206.63h-2.0M549.3 210.30h3.6M571.1 210.30h-3.6M549.3 213.97h2.0M571.1 213.97h-2.0M549.3 217.64h2.0M571.1 217.64h-2.0M549.3 221.31h2.0M571.1 221.31h-2.0M549.3 224.98h2.0M571.1 224.98h-2.0M549.3 228.65h3.6M571.1 228.65h-3.6M549.3 232.32h2.0M571.1 232.32h-2.0M549.3 235.99h2.0M571.1 235.99h-2.0M549.3 239.66h2.0M571.1 239.66h-2.0M549.3 243.33h2.0M571.1 243.33h-2.0" stroke="#3A3A3A" stroke-width="0.7" fill="none" opacity="0.8"/>
<text x="560.5" y="194.6" font-size="8.2" fill="#2A2A30" text-anchor="middle" stroke="#2A2A30" stroke-width="0.22">110</text>
<text x="560.5" y="212.9" font-size="8.2" fill="#2A2A30" text-anchor="middle" stroke="#2A2A30" stroke-width="0.22">120</text>
<text x="560.5" y="231.2" font-size="8.2" fill="#2A2A30" text-anchor="middle" stroke="#2A2A30" stroke-width="0.22">130</text>
<path d="M542.6 206.4L548.2 210.3L542.6 214.2z" fill="#E61414"/>
<path d="M576.6 206.4L572.4 210.3L576.6 214.2z" fill="#E61414"/>
<path d="M536.9 200.1l3.3 6.2h-6.6zM536.9 219.9l3.3 -6.2h-6.6z" fill="#F2EA2C"/>
<path d="M536.9 205.1V214.9" stroke="#F2EA2C" stroke-width="1.6"/>
<text x="600.2" y="177.5" font-size="8.2" fill="#262626" text-anchor="end" stroke="#262626" stroke-width="0.22">AC</text>
<text x="600.2" y="190.4" font-size="8.2" fill="#262626" text-anchor="end" stroke="#262626" stroke-width="0.22">DC</text>
<text x="600.2" y="203.4" font-size="8.2" fill="#262626" text-anchor="end" stroke="#262626" stroke-width="0.22">GND</text>
<text x="600.2" y="216.3" font-size="8.2" fill="#262626" text-anchor="end" stroke="#262626" stroke-width="0.22">OFF</text>
<rect x="602.4" y="165.4" width="13.0" height="57.2" fill="#B4B4B4"/>
<path d="M615.4 165.9V222.6H602.9" stroke="#484848" stroke-width="1.0" fill="none"/>
<path d="M602.4 222.6V165.4H615.4" stroke="#2C2C2C" stroke-width="1.2" fill="none"/>
<rect x="613.5" y="166.0" width="1.9" height="56.6" fill="#747474"/>
<rect x="607.5" y="179.4" width="2.2" height="37.7" fill="#0A0A0A"/>
<rect x="604.0" y="166.8" width="9.8" height="13.0" fill="#CACACA"/>
<path d="M604.0 179.8V166.8H613.8" stroke="#F2F2F2" stroke-width="1" fill="none"/>
<path d="M613.8 166.8V179.8H604.0" stroke="#5A5A5A" stroke-width="1" fill="none"/>
<path d="M605.6 170.72H612.2M605.6 173.18H612.2M605.6 175.62H612.2M605.6 178.08H612.2" stroke="#F4F4F4" stroke-width="1" fill="none"/>
<path d="M605.6 169.62H612.2M605.6 172.08H612.2M605.6 174.53H612.2M605.6 176.98H612.2" stroke="#4A4A4A" stroke-width="1" fill="none"/>
<text x="600.4" y="233.6" font-size="8.2" fill="#262626" text-anchor="end" stroke="#262626" stroke-width="0.22" textLength="20.8" lengthAdjust="spacingAndGlyphs">Invert</text>
<rect x="602.6" y="224.9" width="12.9" height="12.5" fill="url(#gbtn)"/>
<path d="M602.6 237.4V224.9H615.5" stroke="#C8C8C8" stroke-width="1" fill="none"/>
<path d="M615.5 224.9V237.4H602.6" stroke="#3A3A3A" stroke-width="1.3" fill="none"/>
<text x="600.4" y="249.2" font-size="8.2" fill="#262626" text-anchor="end" stroke="#262626" stroke-width="0.22" textLength="16.0" lengthAdjust="spacingAndGlyphs">A+B</text>
<rect x="602.6" y="239.6" width="12.9" height="12.5" fill="url(#gbtn)"/>
<path d="M602.6 252.1V239.6H615.5" stroke="#C8C8C8" stroke-width="1" fill="none"/>
<path d="M615.5 239.6V252.1H602.6" stroke="#3A3A3A" stroke-width="1.3" fill="none"/>
<path d="M534.7 330.7V290.3A40.5 40.5 0 0 1 615.7 290.3V330.7z" fill="#FDFDFD" stroke="#4E4E4E" stroke-width="0.9"/>
<rect x="557.2" y="310.3" width="36.0" height="20.9" fill="#A9A9A9"/>
<path d="M557.2 310.3V330.7M593.2 310.3V330.7" stroke="#4E4E4E" stroke-width="0.9"/>
<path d="M586.2 267.0L596.7 255.4" stroke="#4E4E4E" stroke-width="4.4"/>
<path d="M586.2 267.0L596.7 255.4" stroke="#A9A9A9" stroke-width="2.8"/>
<path d="M556.1 309.4L552.9 312.6M550.3 300.6L546.0 302.4M548.2 290.3L543.6 290.3M550.3 280.0L546.0 278.2M556.1 271.2L552.9 268.0M564.9 265.4L563.1 261.1M575.2 263.3L575.2 258.7M585.5 265.4L587.3 261.1M594.3 271.2L597.5 268.0M600.1 280.0L604.4 278.2M602.2 290.3L606.8 290.3M600.1 300.6L604.4 302.4M594.3 309.4L597.5 312.6" stroke="#2E2E2E" stroke-width="0.9" fill="none"/>
<text x="549.6" y="318.1" font-size="6.1" fill="#2C2C2C" text-anchor="middle" stroke="#2C2C2C" stroke-width="0.22">20</text>
<text x="541.8" y="306.4" font-size="6.1" fill="#2C2C2C" text-anchor="middle" stroke="#2C2C2C" stroke-width="0.22">10</text>
<text x="539.0" y="292.5" font-size="6.1" fill="#2C2C2C" text-anchor="middle" stroke="#2C2C2C" stroke-width="0.22">5</text>
<text x="541.8" y="278.6" font-size="6.1" fill="#2C2C2C" text-anchor="middle" stroke="#2C2C2C" stroke-width="0.22">2</text>
<text x="549.6" y="266.9" font-size="6.1" fill="#2C2C2C" text-anchor="middle" stroke="#2C2C2C" stroke-width="0.22">1</text>
<text x="561.3" y="259.1" font-size="6.1" fill="#2C2C2C" text-anchor="middle" stroke="#2C2C2C" stroke-width="0.22">0.5</text>
<text x="575.2" y="256.3" font-size="6.1" fill="#2C2C2C" text-anchor="middle" stroke="#2C2C2C" stroke-width="0.22">0.2</text>
<text x="587.9" y="258.8" font-size="6.1" fill="#2C2C2C" text-anchor="middle" stroke="#2C2C2C" stroke-width="0.22">0.1</text>
<text x="600.8" y="266.9" font-size="6.1" fill="#2C2C2C" text-anchor="middle" stroke="#2C2C2C" stroke-width="0.22">50</text>
<text x="608.6" y="278.6" font-size="6.1" fill="#2C2C2C" text-anchor="middle" stroke="#2C2C2C" stroke-width="0.22">20</text>
<text x="611.4" y="292.5" font-size="6.1" fill="#2C2C2C" text-anchor="middle" stroke="#2C2C2C" stroke-width="0.22">10</text>
<text x="608.6" y="306.4" font-size="6.1" fill="#2C2C2C" text-anchor="middle" stroke="#2C2C2C" stroke-width="0.22">5</text>
<text x="600.8" y="318.1" font-size="6.1" fill="#2C2C2C" text-anchor="middle" stroke="#2C2C2C" stroke-width="0.22">2</text>
<text x="542.0" y="326.4" font-size="8.8" fill="#2C2C2C" stroke="#2C2C2C" stroke-width="0.22">V</text>
<text x="611.1" y="326.4" font-size="8.8" fill="#2C2C2C" text-anchor="end" stroke="#2C2C2C" stroke-width="0.22">mV</text>
<rect x="559.4" y="319.2" width="32.2" height="10.6" fill="#FFFFFF"/>
<path d="M559.4 329.8V319.2H591.6" stroke="#2C2C2C" stroke-width="1.2" fill="none"/>
<path d="M591.6 319.7V329.8H559.9" stroke="#DADADA" stroke-width="1" fill="none"/>
<text x="561.9" y="327.3" font-size="7.7" fill="#34347C">5</text>
<circle cx="576.4" cy="291.9" r="28.2" fill="#1E1E1E" opacity="0.55" filter="url(#fknob)"/>
<circle cx="575.2" cy="290.3" r="27.3" fill="url(#gknobo)" stroke="#4A4A4A" stroke-width="0.8"/>
<circle cx="575.2" cy="290.3" r="27.3" fill="url(#gknobr)"/>
<circle cx="576.6" cy="291.9" r="15.8" fill="#2A2A2A" opacity="0.7" filter="url(#fknob2)"/>
<circle cx="575.7" cy="290.9" r="14.4" fill="url(#gknobi)" stroke="#5A5A5A" stroke-width="0.7"/>
<g transform="rotate(270.0 575.2 290.3)"><path d="M575.2 265.1l4.7 8.2h-9.4z" fill="#F2EA2C"/></g>
<g transform="rotate(270.0 581.8 296.9)"><path d="M581.8 294.1l2.8 4.8h-5.6z" fill="#F2EA2C"/></g>
<text x="659.6" y="155.3" font-size="11.3" fill="#E0288A" text-anchor="middle" font-weight="bold" textLength="51.5" lengthAdjust="spacingAndGlyphs">Channel C</text>
<text x="630.8" y="171.8" font-size="8.2" fill="#262626" stroke="#262626" stroke-width="0.22" textLength="29.8" lengthAdjust="spacingAndGlyphs">Position</text>
<rect x="628.2" y="175.1" width="36.0" height="73.0" fill="#BEBEBE"/>
<path d="M664.2 175.6V248.1H628.7" stroke="#484848" stroke-width="1.0" fill="none"/>
<path d="M628.2 248.1V175.1H664.2" stroke="#2C2C2C" stroke-width="1.2" fill="none"/>
<rect x="658.2" y="175.7" width="5.5" height="71.9" fill="#B0B0B0"/>
<rect x="635.4" y="177.1" width="22.8" height="68.1" fill="url(#gwheelv)"/>
<path d="M658.2 177.1V245.2" stroke="#161616" stroke-width="1.2"/>
<path d="M635.4 177.1V245.2" stroke="#303030" stroke-width="1.0"/>
<path d="M635.9 180.94h2.0M657.7 180.94h-2.0M635.9 184.61h2.0M657.7 184.61h-2.0M635.9 188.28h2.0M657.7 188.28h-2.0M635.9 191.95h3.6M657.7 191.95h-3.6M635.9 195.62h2.0M657.7 195.62h-2.0M635.9 199.29h2.0M657.7 199.29h-2.0M635.9 202.96h2.0M657.7 202.96h-2.0M635.9 206.63h2.0M657.7 206.63h-2.0M635.9 210.30h3.6M657.7 210.30h-3.6M635.9 213.97h2.0M657.7 213.97h-2.0M635.9 217.64h2.0M657.7 217.64h-2.0M635.9 221.31h2.0M657.7 221.31h-2.0M635.9 224.98h2.0M657.7 224.98h-2.0M635.9 228.65h3.6M657.7 228.65h-3.6M635.9 232.32h2.0M657.7 232.32h-2.0M635.9 235.99h2.0M657.7 235.99h-2.0M635.9 239.66h2.0M657.7 239.66h-2.0M635.9 243.33h2.0M657.7 243.33h-2.0" stroke="#3A3A3A" stroke-width="0.7" fill="none" opacity="0.8"/>
<text x="647.1" y="194.6" font-size="8.2" fill="#2A2A30" text-anchor="middle" stroke="#2A2A30" stroke-width="0.22">-50</text>
<text x="647.1" y="212.9" font-size="8.2" fill="#2A2A30" text-anchor="middle" stroke="#2A2A30" stroke-width="0.22">-40</text>
<text x="647.1" y="231.2" font-size="8.2" fill="#2A2A30" text-anchor="middle" stroke="#2A2A30" stroke-width="0.22">-30</text>
<path d="M629.2 206.4L634.8 210.3L629.2 214.2z" fill="#E61414"/>
<path d="M663.2 206.4L659.0 210.3L663.2 214.2z" fill="#E61414"/>
<path d="M623.5 200.1l3.3 6.2h-6.6zM623.5 219.9l3.3 -6.2h-6.6z" fill="#E0288A"/>
<path d="M623.5 205.1V214.9" stroke="#E0288A" stroke-width="1.6"/>
<text x="686.8" y="177.5" font-size="8.2" fill="#262626" text-anchor="end" stroke="#262626" stroke-width="0.22">AC</text>
<text x="686.8" y="190.4" font-size="8.2" fill="#262626" text-anchor="end" stroke="#262626" stroke-width="0.22">DC</text>
<text x="686.8" y="203.4" font-size="8.2" fill="#262626" text-anchor="end" stroke="#262626" stroke-width="0.22">GND</text>
<text x="686.8" y="216.3" font-size="8.2" fill="#262626" text-anchor="end" stroke="#262626" stroke-width="0.22">OFF</text>
<rect x="689.0" y="165.4" width="13.0" height="57.2" fill="#B4B4B4"/>
<path d="M702.0 165.9V222.6H689.5" stroke="#484848" stroke-width="1.0" fill="none"/>
<path d="M689.0 222.6V165.4H702.0" stroke="#2C2C2C" stroke-width="1.2" fill="none"/>
<rect x="700.1" y="166.0" width="1.9" height="56.6" fill="#747474"/>
<rect x="694.1" y="179.4" width="2.2" height="37.7" fill="#0A0A0A"/>
<rect x="690.6" y="166.8" width="9.8" height="13.0" fill="#CACACA"/>
<path d="M690.6 179.8V166.8H700.4" stroke="#F2F2F2" stroke-width="1" fill="none"/>
<path d="M700.4 166.8V179.8H690.6" stroke="#5A5A5A" stroke-width="1" fill="none"/>
<path d="M692.2 170.72H698.8M692.2 173.18H698.8M692.2 175.62H698.8M692.2 178.08H698.8" stroke="#F4F4F4" stroke-width="1" fill="none"/>
<path d="M692.2 169.62H698.8M692.2 172.08H698.8M692.2 174.53H698.8M692.2 176.98H698.8" stroke="#4A4A4A" stroke-width="1" fill="none"/>
<text x="687.0" y="233.6" font-size="8.2" fill="#262626" text-anchor="end" stroke="#262626" stroke-width="0.22" textLength="20.8" lengthAdjust="spacingAndGlyphs">Invert</text>
<rect x="689.2" y="224.9" width="12.9" height="12.5" fill="url(#gbtn)"/>
<path d="M689.2 237.4V224.9H702.1" stroke="#C8C8C8" stroke-width="1" fill="none"/>
<path d="M702.1 224.9V237.4H689.2" stroke="#3A3A3A" stroke-width="1.3" fill="none"/>
<text x="687.0" y="249.2" font-size="8.2" fill="#262626" text-anchor="end" stroke="#262626" stroke-width="0.22" textLength="16.0" lengthAdjust="spacingAndGlyphs">C+D</text>
<rect x="689.2" y="239.6" width="12.9" height="12.5" fill="url(#gbtn)"/>
<path d="M689.2 252.1V239.6H702.1" stroke="#C8C8C8" stroke-width="1" fill="none"/>
<path d="M702.1 239.6V252.1H689.2" stroke="#3A3A3A" stroke-width="1.3" fill="none"/>
<path d="M621.3 330.7V290.3A40.5 40.5 0 0 1 702.3 290.3V330.7z" fill="#FDFDFD" stroke="#4E4E4E" stroke-width="0.9"/>
<rect x="643.8" y="310.3" width="36.0" height="20.9" fill="#A9A9A9"/>
<path d="M643.8 310.3V330.7M679.8 310.3V330.7" stroke="#4E4E4E" stroke-width="0.9"/>
<path d="M672.8 267.0L683.3 255.4" stroke="#4E4E4E" stroke-width="4.4"/>
<path d="M672.8 267.0L683.3 255.4" stroke="#A9A9A9" stroke-width="2.8"/>
<path d="M642.7 309.4L639.5 312.6M636.9 300.6L632.6 302.4M634.8 290.3L630.2 290.3M636.9 280.0L632.6 278.2M642.7 271.2L639.5 268.0M651.5 265.4L649.7 261.1M661.8 263.3L661.8 258.7M672.1 265.4L673.9 261.1M680.9 271.2L684.1 268.0M686.7 280.0L691.0 278.2M688.8 290.3L693.4 290.3M686.7 300.6L691.0 302.4M680.9 309.4L684.1 312.6" stroke="#2E2E2E" stroke-width="0.9" fill="none"/>
<text x="636.2" y="318.1" font-size="6.1" fill="#2C2C2C" text-anchor="middle" stroke="#2C2C2C" stroke-width="0.22">20</text>
<text x="628.4" y="306.4" font-size="6.1" fill="#2C2C2C" text-anchor="middle" stroke="#2C2C2C" stroke-width="0.22">10</text>
<text x="625.6" y="292.5" font-size="6.1" fill="#2C2C2C" text-anchor="middle" stroke="#2C2C2C" stroke-width="0.22">5</text>
<text x="628.4" y="278.6" font-size="6.1" fill="#2C2C2C" text-anchor="middle" stroke="#2C2C2C" stroke-width="0.22">2</text>
<text x="636.2" y="266.9" font-size="6.1" fill="#2C2C2C" text-anchor="middle" stroke="#2C2C2C" stroke-width="0.22">1</text>
<text x="647.9" y="259.1" font-size="6.1" fill="#2C2C2C" text-anchor="middle" stroke="#2C2C2C" stroke-width="0.22">0.5</text>
<text x="661.8" y="256.3" font-size="6.1" fill="#2C2C2C" text-anchor="middle" stroke="#2C2C2C" stroke-width="0.22">0.2</text>
<text x="674.5" y="258.8" font-size="6.1" fill="#2C2C2C" text-anchor="middle" stroke="#2C2C2C" stroke-width="0.22">0.1</text>
<text x="687.4" y="266.9" font-size="6.1" fill="#2C2C2C" text-anchor="middle" stroke="#2C2C2C" stroke-width="0.22">50</text>
<text x="695.2" y="278.6" font-size="6.1" fill="#2C2C2C" text-anchor="middle" stroke="#2C2C2C" stroke-width="0.22">20</text>
<text x="698.0" y="292.5" font-size="6.1" fill="#2C2C2C" text-anchor="middle" stroke="#2C2C2C" stroke-width="0.22">10</text>
<text x="695.2" y="306.4" font-size="6.1" fill="#2C2C2C" text-anchor="middle" stroke="#2C2C2C" stroke-width="0.22">5</text>
<text x="687.4" y="318.1" font-size="6.1" fill="#2C2C2C" text-anchor="middle" stroke="#2C2C2C" stroke-width="0.22">2</text>
<text x="628.6" y="326.4" font-size="8.8" fill="#2C2C2C" stroke="#2C2C2C" stroke-width="0.22">V</text>
<text x="697.7" y="326.4" font-size="8.8" fill="#2C2C2C" text-anchor="end" stroke="#2C2C2C" stroke-width="0.22">mV</text>
<rect x="646.0" y="319.2" width="32.2" height="10.6" fill="#FFFFFF"/>
<path d="M646.0 329.8V319.2H678.2" stroke="#2C2C2C" stroke-width="1.2" fill="none"/>
<path d="M678.2 319.7V329.8H646.5" stroke="#DADADA" stroke-width="1" fill="none"/>
<text x="648.5" y="327.3" font-size="7.7" fill="#34347C">5</text>
<circle cx="663.0" cy="291.9" r="28.2" fill="#1E1E1E" opacity="0.55" filter="url(#fknob)"/>
<circle cx="661.8" cy="290.3" r="27.3" fill="url(#gknobo)" stroke="#4A4A4A" stroke-width="0.8"/>
<circle cx="661.8" cy="290.3" r="27.3" fill="url(#gknobr)"/>
<circle cx="663.2" cy="291.9" r="15.8" fill="#2A2A2A" opacity="0.7" filter="url(#fknob2)"/>
<circle cx="662.3" cy="290.9" r="14.4" fill="url(#gknobi)" stroke="#5A5A5A" stroke-width="0.7"/>
<g transform="rotate(270.0 661.8 290.3)"><path d="M661.8 265.1l4.7 8.2h-9.4z" fill="#E0288A"/></g>
<g transform="rotate(270.0 668.4 296.9)"><path d="M668.4 294.1l2.8 4.8h-5.6z" fill="#E0288A"/></g>
<text x="573.6" y="350.1" font-size="11.3" fill="#2C9AE2" text-anchor="middle" font-weight="bold" textLength="52.0" lengthAdjust="spacingAndGlyphs">Channel B</text>
<text x="544.2" y="366.8" font-size="8.2" fill="#262626" stroke="#262626" stroke-width="0.22" textLength="29.8" lengthAdjust="spacingAndGlyphs">Position</text>
<rect x="541.6" y="370.1" width="36.0" height="73.0" fill="#BEBEBE"/>
<path d="M577.6 370.6V443.1H542.1" stroke="#484848" stroke-width="1.0" fill="none"/>
<path d="M541.6 443.1V370.1H577.6" stroke="#2C2C2C" stroke-width="1.2" fill="none"/>
<rect x="571.6" y="370.7" width="5.5" height="71.9" fill="#B0B0B0"/>
<rect x="548.8" y="372.1" width="22.8" height="68.1" fill="url(#gwheelv)"/>
<path d="M571.6 372.1V440.2" stroke="#161616" stroke-width="1.2"/>
<path d="M548.8 372.1V440.2" stroke="#303030" stroke-width="1.0"/>
<path d="M549.3 375.94h2.0M571.1 375.94h-2.0M549.3 379.61h2.0M571.1 379.61h-2.0M549.3 383.28h2.0M571.1 383.28h-2.0M549.3 386.95h3.6M571.1 386.95h-3.6M549.3 390.62h2.0M571.1 390.62h-2.0M549.3 394.29h2.0M571.1 394.29h-2.0M549.3 397.96h2.0M571.1 397.96h-2.0M549.3 401.63h2.0M571.1 401.63h-2.0M549.3 405.30h3.6M571.1 405.30h-3.6M549.3 408.97h2.0M571.1 408.97h-2.0M549.3 412.64h2.0M571.1 412.64h-2.0M549.3 416.31h2.0M571.1 416.31h-2.0M549.3 419.98h2.0M571.1 419.98h-2.0M549.3 423.65h3.6M571.1 423.65h-3.6M549.3 427.32h2.0M571.1 427.32h-2.0M549.3 430.99h2.0M571.1 430.99h-2.0M549.3 434.66h2.0M571.1 434.66h-2.0M549.3 438.33h2.0M571.1 438.33h-2.0" stroke="#3A3A3A" stroke-width="0.7" fill="none" opacity="0.8"/>
<text x="560.5" y="389.6" font-size="8.2" fill="#2A2A30" text-anchor="middle" stroke="#2A2A30" stroke-width="0.22">30</text>
<text x="560.5" y="407.9" font-size="8.2" fill="#2A2A30" text-anchor="middle" stroke="#2A2A30" stroke-width="0.22">40</text>
<text x="560.5" y="426.3" font-size="8.2" fill="#2A2A30" text-anchor="middle" stroke="#2A2A30" stroke-width="0.22">50</text>
<path d="M542.6 401.4L548.2 405.3L542.6 409.2z" fill="#E61414"/>
<path d="M576.6 401.4L572.4 405.3L576.6 409.2z" fill="#E61414"/>
<path d="M536.9 395.1l3.3 6.2h-6.6zM536.9 414.9l3.3 -6.2h-6.6z" fill="#2C9AE2"/>
<path d="M536.9 400.1V409.9" stroke="#2C9AE2" stroke-width="1.6"/>
<text x="600.2" y="372.5" font-size="8.2" fill="#262626" text-anchor="end" stroke="#262626" stroke-width="0.22">AC</text>
<text x="600.2" y="385.4" font-size="8.2" fill="#262626" text-anchor="end" stroke="#262626" stroke-width="0.22">DC</text>
<text x="600.2" y="398.4" font-size="8.2" fill="#262626" text-anchor="end" stroke="#262626" stroke-width="0.22">GND</text>
<text x="600.2" y="411.4" font-size="8.2" fill="#262626" text-anchor="end" stroke="#262626" stroke-width="0.22">OFF</text>
<rect x="602.4" y="360.4" width="13.0" height="57.2" fill="#B4B4B4"/>
<path d="M615.4 360.9V417.6H602.9" stroke="#484848" stroke-width="1.0" fill="none"/>
<path d="M602.4 417.6V360.4H615.4" stroke="#2C2C2C" stroke-width="1.2" fill="none"/>
<rect x="613.5" y="361.0" width="1.9" height="56.6" fill="#747474"/>
<rect x="607.5" y="374.4" width="2.2" height="37.7" fill="#0A0A0A"/>
<rect x="604.0" y="361.8" width="9.8" height="13.0" fill="#CACACA"/>
<path d="M604.0 374.8V361.8H613.8" stroke="#F2F2F2" stroke-width="1" fill="none"/>
<path d="M613.8 361.8V374.8H604.0" stroke="#5A5A5A" stroke-width="1" fill="none"/>
<path d="M605.6 365.72H612.2M605.6 368.17H612.2M605.6 370.62H612.2M605.6 373.07H612.2" stroke="#F4F4F4" stroke-width="1" fill="none"/>
<path d="M605.6 364.62H612.2M605.6 367.07H612.2M605.6 369.52H612.2M605.6 371.97H612.2" stroke="#4A4A4A" stroke-width="1" fill="none"/>
<text x="600.4" y="428.6" font-size="8.2" fill="#262626" text-anchor="end" stroke="#262626" stroke-width="0.22" textLength="20.8" lengthAdjust="spacingAndGlyphs">Invert</text>
<rect x="602.6" y="419.9" width="12.9" height="12.5" fill="url(#gbtn)"/>
<path d="M602.6 432.4V419.9H615.5" stroke="#C8C8C8" stroke-width="1" fill="none"/>
<path d="M615.5 419.9V432.4H602.6" stroke="#3A3A3A" stroke-width="1.3" fill="none"/>
<path d="M534.7 525.7V485.3A40.5 40.5 0 0 1 615.7 485.3V525.7z" fill="#FDFDFD" stroke="#4E4E4E" stroke-width="0.9"/>
<rect x="557.2" y="505.3" width="36.0" height="20.9" fill="#A9A9A9"/>
<path d="M557.2 505.3V525.7M593.2 505.3V525.7" stroke="#4E4E4E" stroke-width="0.9"/>
<path d="M586.2 462.0L596.7 450.4" stroke="#4E4E4E" stroke-width="4.4"/>
<path d="M586.2 462.0L596.7 450.4" stroke="#A9A9A9" stroke-width="2.8"/>
<path d="M556.1 504.4L552.9 507.6M550.3 495.6L546.0 497.4M548.2 485.3L543.6 485.3M550.3 475.0L546.0 473.2M556.1 466.2L552.9 463.0M564.9 460.4L563.1 456.1M575.2 458.3L575.2 453.7M585.5 460.4L587.3 456.1M594.3 466.2L597.5 463.0M600.1 475.0L604.4 473.2M602.2 485.3L606.8 485.3M600.1 495.6L604.4 497.4M594.3 504.4L597.5 507.6" stroke="#2E2E2E" stroke-width="0.9" fill="none"/>
<text x="549.6" y="513.1" font-size="6.1" fill="#2C2C2C" text-anchor="middle" stroke="#2C2C2C" stroke-width="0.22">20</text>
<text x="541.8" y="501.4" font-size="6.1" fill="#2C2C2C" text-anchor="middle" stroke="#2C2C2C" stroke-width="0.22">10</text>
<text x="539.0" y="487.5" font-size="6.1" fill="#2C2C2C" text-anchor="middle" stroke="#2C2C2C" stroke-width="0.22">5</text>
<text x="541.8" y="473.6" font-size="6.1" fill="#2C2C2C" text-anchor="middle" stroke="#2C2C2C" stroke-width="0.22">2</text>
<text x="549.6" y="461.9" font-size="6.1" fill="#2C2C2C" text-anchor="middle" stroke="#2C2C2C" stroke-width="0.22">1</text>
<text x="561.3" y="454.1" font-size="6.1" fill="#2C2C2C" text-anchor="middle" stroke="#2C2C2C" stroke-width="0.22">0.5</text>
<text x="575.2" y="451.3" font-size="6.1" fill="#2C2C2C" text-anchor="middle" stroke="#2C2C2C" stroke-width="0.22">0.2</text>
<text x="587.9" y="453.8" font-size="6.1" fill="#2C2C2C" text-anchor="middle" stroke="#2C2C2C" stroke-width="0.22">0.1</text>
<text x="600.8" y="461.9" font-size="6.1" fill="#2C2C2C" text-anchor="middle" stroke="#2C2C2C" stroke-width="0.22">50</text>
<text x="608.6" y="473.6" font-size="6.1" fill="#2C2C2C" text-anchor="middle" stroke="#2C2C2C" stroke-width="0.22">20</text>
<text x="611.4" y="487.5" font-size="6.1" fill="#2C2C2C" text-anchor="middle" stroke="#2C2C2C" stroke-width="0.22">10</text>
<text x="608.6" y="501.4" font-size="6.1" fill="#2C2C2C" text-anchor="middle" stroke="#2C2C2C" stroke-width="0.22">5</text>
<text x="600.8" y="513.1" font-size="6.1" fill="#2C2C2C" text-anchor="middle" stroke="#2C2C2C" stroke-width="0.22">2</text>
<text x="542.0" y="521.4" font-size="8.8" fill="#2C2C2C" stroke="#2C2C2C" stroke-width="0.22">V</text>
<text x="611.1" y="521.4" font-size="8.8" fill="#2C2C2C" text-anchor="end" stroke="#2C2C2C" stroke-width="0.22">mV</text>
<rect x="559.4" y="514.2" width="32.2" height="10.6" fill="#FFFFFF"/>
<path d="M559.4 524.8V514.2H591.6" stroke="#2C2C2C" stroke-width="1.2" fill="none"/>
<path d="M591.6 514.7V524.8H559.9" stroke="#DADADA" stroke-width="1" fill="none"/>
<text x="561.9" y="522.3" font-size="7.7" fill="#34347C">5</text>
<circle cx="576.4" cy="486.9" r="28.2" fill="#1E1E1E" opacity="0.55" filter="url(#fknob)"/>
<circle cx="575.2" cy="485.3" r="27.3" fill="url(#gknobo)" stroke="#4A4A4A" stroke-width="0.8"/>
<circle cx="575.2" cy="485.3" r="27.3" fill="url(#gknobr)"/>
<circle cx="576.6" cy="486.9" r="15.8" fill="#2A2A2A" opacity="0.7" filter="url(#fknob2)"/>
<circle cx="575.7" cy="485.9" r="14.4" fill="url(#gknobi)" stroke="#5A5A5A" stroke-width="0.7"/>
<g transform="rotate(270.0 575.2 485.3)"><path d="M575.2 460.1l4.7 8.2h-9.4z" fill="#2C9AE2"/></g>
<g transform="rotate(270.0 581.8 491.9)"><path d="M581.8 489.1l2.8 4.8h-5.6z" fill="#2C9AE2"/></g>
<text x="659.8" y="350.1" font-size="11.3" fill="#1AA256" text-anchor="middle" font-weight="bold" textLength="52.0" lengthAdjust="spacingAndGlyphs">Channel D</text>
<text x="630.8" y="366.8" font-size="8.2" fill="#262626" stroke="#262626" stroke-width="0.22" textLength="29.8" lengthAdjust="spacingAndGlyphs">Position</text>
<rect x="628.2" y="370.1" width="36.0" height="73.0" fill="#BEBEBE"/>
<path d="M664.2 370.6V443.1H628.7" stroke="#484848" stroke-width="1.0" fill="none"/>
<path d="M628.2 443.1V370.1H664.2" stroke="#2C2C2C" stroke-width="1.2" fill="none"/>
<rect x="658.2" y="370.7" width="5.5" height="71.9" fill="#B0B0B0"/>
<rect x="635.4" y="372.1" width="22.8" height="68.1" fill="url(#gwheelv)"/>
<path d="M658.2 372.1V440.2" stroke="#161616" stroke-width="1.2"/>
<path d="M635.4 372.1V440.2" stroke="#303030" stroke-width="1.0"/>
<path d="M635.9 375.94h2.0M657.7 375.94h-2.0M635.9 379.61h2.0M657.7 379.61h-2.0M635.9 383.28h2.0M657.7 383.28h-2.0M635.9 386.95h3.6M657.7 386.95h-3.6M635.9 390.62h2.0M657.7 390.62h-2.0M635.9 394.29h2.0M657.7 394.29h-2.0M635.9 397.96h2.0M657.7 397.96h-2.0M635.9 401.63h2.0M657.7 401.63h-2.0M635.9 405.30h3.6M657.7 405.30h-3.6M635.9 408.97h2.0M657.7 408.97h-2.0M635.9 412.64h2.0M657.7 412.64h-2.0M635.9 416.31h2.0M657.7 416.31h-2.0M635.9 419.98h2.0M657.7 419.98h-2.0M635.9 423.65h3.6M657.7 423.65h-3.6M635.9 427.32h2.0M657.7 427.32h-2.0M635.9 430.99h2.0M657.7 430.99h-2.0M635.9 434.66h2.0M657.7 434.66h-2.0M635.9 438.33h2.0M657.7 438.33h-2.0" stroke="#3A3A3A" stroke-width="0.7" fill="none" opacity="0.8"/>
<text x="647.1" y="389.6" font-size="8.2" fill="#2A2A30" text-anchor="middle" stroke="#2A2A30" stroke-width="0.22">-130</text>
<text x="647.1" y="407.9" font-size="8.2" fill="#2A2A30" text-anchor="middle" stroke="#2A2A30" stroke-width="0.22">-120</text>
<text x="647.1" y="426.3" font-size="8.2" fill="#2A2A30" text-anchor="middle" stroke="#2A2A30" stroke-width="0.22">-110</text>
<path d="M629.2 401.4L634.8 405.3L629.2 409.2z" fill="#E61414"/>
<path d="M663.2 401.4L659.0 405.3L663.2 409.2z" fill="#E61414"/>
<path d="M623.5 395.1l3.3 6.2h-6.6zM623.5 414.9l3.3 -6.2h-6.6z" fill="#1AA256"/>
<path d="M623.5 400.1V409.9" stroke="#1AA256" stroke-width="1.6"/>
<text x="686.8" y="372.5" font-size="8.2" fill="#262626" text-anchor="end" stroke="#262626" stroke-width="0.22">AC</text>
<text x="686.8" y="385.4" font-size="8.2" fill="#262626" text-anchor="end" stroke="#262626" stroke-width="0.22">DC</text>
<text x="686.8" y="398.4" font-size="8.2" fill="#262626" text-anchor="end" stroke="#262626" stroke-width="0.22">GND</text>
<text x="686.8" y="411.4" font-size="8.2" fill="#262626" text-anchor="end" stroke="#262626" stroke-width="0.22">OFF</text>
<rect x="689.0" y="360.4" width="13.0" height="57.2" fill="#B4B4B4"/>
<path d="M702.0 360.9V417.6H689.5" stroke="#484848" stroke-width="1.0" fill="none"/>
<path d="M689.0 417.6V360.4H702.0" stroke="#2C2C2C" stroke-width="1.2" fill="none"/>
<rect x="700.1" y="361.0" width="1.9" height="56.6" fill="#747474"/>
<rect x="694.1" y="374.4" width="2.2" height="37.7" fill="#0A0A0A"/>
<rect x="690.6" y="361.8" width="9.8" height="13.0" fill="#CACACA"/>
<path d="M690.6 374.8V361.8H700.4" stroke="#F2F2F2" stroke-width="1" fill="none"/>
<path d="M700.4 361.8V374.8H690.6" stroke="#5A5A5A" stroke-width="1" fill="none"/>
<path d="M692.2 365.72H698.8M692.2 368.17H698.8M692.2 370.62H698.8M692.2 373.07H698.8" stroke="#F4F4F4" stroke-width="1" fill="none"/>
<path d="M692.2 364.62H698.8M692.2 367.07H698.8M692.2 369.52H698.8M692.2 371.97H698.8" stroke="#4A4A4A" stroke-width="1" fill="none"/>
<text x="687.0" y="428.6" font-size="8.2" fill="#262626" text-anchor="end" stroke="#262626" stroke-width="0.22" textLength="20.8" lengthAdjust="spacingAndGlyphs">Invert</text>
<rect x="689.2" y="419.9" width="12.9" height="12.5" fill="url(#gbtn)"/>
<path d="M689.2 432.4V419.9H702.1" stroke="#C8C8C8" stroke-width="1" fill="none"/>
<path d="M702.1 419.9V432.4H689.2" stroke="#3A3A3A" stroke-width="1.3" fill="none"/>
<path d="M621.3 525.7V485.3A40.5 40.5 0 0 1 702.3 485.3V525.7z" fill="#FDFDFD" stroke="#4E4E4E" stroke-width="0.9"/>
<rect x="643.8" y="505.3" width="36.0" height="20.9" fill="#A9A9A9"/>
<path d="M643.8 505.3V525.7M679.8 505.3V525.7" stroke="#4E4E4E" stroke-width="0.9"/>
<path d="M672.8 462.0L683.3 450.4" stroke="#4E4E4E" stroke-width="4.4"/>
<path d="M672.8 462.0L683.3 450.4" stroke="#A9A9A9" stroke-width="2.8"/>
<path d="M642.7 504.4L639.5 507.6M636.9 495.6L632.6 497.4M634.8 485.3L630.2 485.3M636.9 475.0L632.6 473.2M642.7 466.2L639.5 463.0M651.5 460.4L649.7 456.1M661.8 458.3L661.8 453.7M672.1 460.4L673.9 456.1M680.9 466.2L684.1 463.0M686.7 475.0L691.0 473.2M688.8 485.3L693.4 485.3M686.7 495.6L691.0 497.4M680.9 504.4L684.1 507.6" stroke="#2E2E2E" stroke-width="0.9" fill="none"/>
<text x="636.2" y="513.1" font-size="6.1" fill="#2C2C2C" text-anchor="middle" stroke="#2C2C2C" stroke-width="0.22">20</text>
<text x="628.4" y="501.4" font-size="6.1" fill="#2C2C2C" text-anchor="middle" stroke="#2C2C2C" stroke-width="0.22">10</text>
<text x="625.6" y="487.5" font-size="6.1" fill="#2C2C2C" text-anchor="middle" stroke="#2C2C2C" stroke-width="0.22">5</text>
<text x="628.4" y="473.6" font-size="6.1" fill="#2C2C2C" text-anchor="middle" stroke="#2C2C2C" stroke-width="0.22">2</text>
<text x="636.2" y="461.9" font-size="6.1" fill="#2C2C2C" text-anchor="middle" stroke="#2C2C2C" stroke-width="0.22">1</text>
<text x="647.9" y="454.1" font-size="6.1" fill="#2C2C2C" text-anchor="middle" stroke="#2C2C2C" stroke-width="0.22">0.5</text>
<text x="661.8" y="451.3" font-size="6.1" fill="#2C2C2C" text-anchor="middle" stroke="#2C2C2C" stroke-width="0.22">0.2</text>
<text x="674.5" y="453.8" font-size="6.1" fill="#2C2C2C" text-anchor="middle" stroke="#2C2C2C" stroke-width="0.22">0.1</text>
<text x="687.4" y="461.9" font-size="6.1" fill="#2C2C2C" text-anchor="middle" stroke="#2C2C2C" stroke-width="0.22">50</text>
<text x="695.2" y="473.6" font-size="6.1" fill="#2C2C2C" text-anchor="middle" stroke="#2C2C2C" stroke-width="0.22">20</text>
<text x="698.0" y="487.5" font-size="6.1" fill="#2C2C2C" text-anchor="middle" stroke="#2C2C2C" stroke-width="0.22">10</text>
<text x="695.2" y="501.4" font-size="6.1" fill="#2C2C2C" text-anchor="middle" stroke="#2C2C2C" stroke-width="0.22">5</text>
<text x="687.4" y="513.1" font-size="6.1" fill="#2C2C2C" text-anchor="middle" stroke="#2C2C2C" stroke-width="0.22">2</text>
<text x="628.6" y="521.4" font-size="8.8" fill="#2C2C2C" stroke="#2C2C2C" stroke-width="0.22">V</text>
<text x="697.7" y="521.4" font-size="8.8" fill="#2C2C2C" text-anchor="end" stroke="#2C2C2C" stroke-width="0.22">mV</text>
<rect x="646.0" y="514.2" width="32.2" height="10.6" fill="#FFFFFF"/>
<path d="M646.0 524.8V514.2H678.2" stroke="#2C2C2C" stroke-width="1.2" fill="none"/>
<path d="M678.2 514.7V524.8H646.5" stroke="#DADADA" stroke-width="1" fill="none"/>
<text x="648.5" y="522.3" font-size="7.7" fill="#34347C">5</text>
<circle cx="663.0" cy="486.9" r="28.2" fill="#1E1E1E" opacity="0.55" filter="url(#fknob)"/>
<circle cx="661.8" cy="485.3" r="27.3" fill="url(#gknobo)" stroke="#4A4A4A" stroke-width="0.8"/>
<circle cx="661.8" cy="485.3" r="27.3" fill="url(#gknobr)"/>
<circle cx="663.2" cy="486.9" r="15.8" fill="#2A2A2A" opacity="0.7" filter="url(#fknob2)"/>
<circle cx="662.3" cy="485.9" r="14.4" fill="url(#gknobi)" stroke="#5A5A5A" stroke-width="0.7"/>
<g transform="rotate(270.0 661.8 485.3)"><path d="M661.8 460.1l4.7 8.2h-9.4z" fill="#1AA256"/></g>
<g transform="rotate(270.0 668.4 491.9)"><path d="M668.4 489.1l2.8 4.8h-5.6z" fill="#1AA256"/></g>
<path d="M445.8 136.5V527.6" stroke="#C9C9C9" stroke-width="1"/>
<path d="M444.5 136.5V527.6" stroke="#262626" stroke-width="1.4"/>
<path d="M532.3 136.5V527.6" stroke="#C9C9C9" stroke-width="1"/>
<path d="M531.0 136.5V527.6" stroke="#262626" stroke-width="1.4"/>
<path d="M618.9 136.5V527.6" stroke="#C9C9C9" stroke-width="1"/>
<path d="M617.6 136.5V527.6" stroke="#262626" stroke-width="1.4"/>
<path d="M705.1 136.5V527.6" stroke="#C9C9C9" stroke-width="1"/>
<path d="M703.8 136.5V527.6" stroke="#262626" stroke-width="1.4"/>
<path d="M444.5 137.9H703.8" stroke="#C9C9C9" stroke-width="1"/>
<path d="M444.5 136.6H703.8" stroke="#262626" stroke-width="1.4"/>
<path d="M444.5 163.7H703.8" stroke="#C9C9C9" stroke-width="1"/>
<path d="M444.5 162.4H703.8" stroke="#262626" stroke-width="1.4"/>
<path d="M444.5 333.7H703.8" stroke="#C9C9C9" stroke-width="1"/>
<path d="M444.5 332.4H703.8" stroke="#262626" stroke-width="1.4"/>
<path d="M444.5 358.7H703.8" stroke="#C9C9C9" stroke-width="1"/>
<path d="M444.5 357.4H703.8" stroke="#262626" stroke-width="1.4"/>
<path d="M444.5 528.7H703.8" stroke="#C9C9C9" stroke-width="1"/>
<path d="M444.5 527.4H703.8" stroke="#262626" stroke-width="1.4"/>
</svg></body></html>
